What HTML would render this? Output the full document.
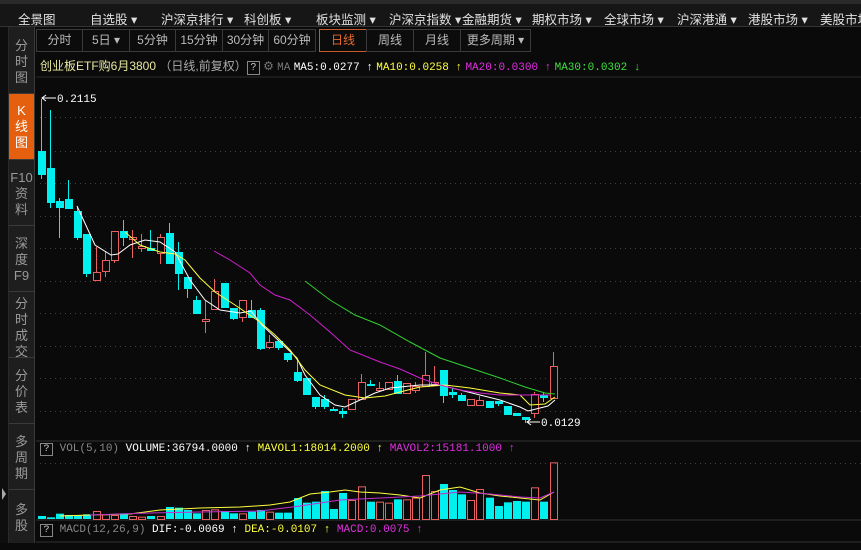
<!DOCTYPE html>
<html><head><meta charset="utf-8"><style>
*{margin:0;padding:0;box-sizing:border-box}
body{width:861px;height:543px;background:#0a0a0a;overflow:hidden;position:relative;font-family:"Liberation Sans","Noto Sans CJK SC",sans-serif;color:#ccc}
.top{position:absolute;left:0;top:0;width:861px;height:27px;background:#161616;border-top:4px solid #2a2a2a;border-bottom:1px solid #333}
.top span{position:absolute;top:5px;font-size:12.5px;color:#e0e0e0;white-space:nowrap}
.side{position:absolute;left:0;top:27px;width:35px;height:516px;background:#0e0e0e}
.side .col{position:absolute;left:8px;top:0;width:27px;height:516px;background:#1e1e1e;border-right:1px solid #3a3a3a;border-left:1px solid #2a2a2a}
.tab{position:absolute;left:9px;width:25px;text-align:center;font-size:13px;line-height:16px;color:#9a9a9a;border-bottom:1px solid #3a3a3a}
.tb{position:absolute;top:29px;height:23px;border:1px solid #3a3a3a;font-size:12px;color:#bbb;text-align:center;line-height:21px;background:#0c0c0c}
.info{position:absolute;top:57px;font-size:12px;white-space:nowrap}
.m{font-family:"Liberation Mono","Noto Sans CJK SC",monospace;font-size:11px}
svg{position:absolute;left:0;top:0}
</style></head><body>
<div class="top">
<span style="left:18px">全景图</span>
<span style="left:90px">自选股 ▾</span>
<span style="left:161px">沪深京排行 ▾</span>
<span style="left:244px">科创板 ▾</span>
<span style="left:316px">板块监测 ▾</span>
<span style="left:389px">沪深京指数 ▾</span>
<span style="left:462px">金融期货 ▾</span>
<span style="left:532px">期权市场 ▾</span>
<span style="left:604px">全球市场 ▾</span>
<span style="left:677px">沪深港通 ▾</span>
<span style="left:748px">港股市场 ▾</span>
<span style="left:820px">美股市场</span>
</div>
<div class="side"><div class="col"></div></div>
<div class="tab" style="top:30px;height:64px;padding-top:8px">分<br>时<br>图</div>
<div class="tab" style="top:94px;height:66px;padding-top:9px;background:#e45f0e;color:#fff">K<br>线<br>图</div>
<div class="tab" style="top:160px;height:66px;padding-top:10px">F10<br>资<br>料</div>
<div class="tab" style="top:226px;height:66px;padding-top:10px">深<br>度<br>F9</div>
<div class="tab" style="top:292px;height:66px;padding-top:4px">分<br>时<br>成<br>交</div>
<div class="tab" style="top:358px;height:66px;padding-top:10px">分<br>价<br>表</div>
<div class="tab" style="top:424px;height:66px;padding-top:10px">多<br>周<br>期</div>
<div class="tab" style="top:490px;height:60px;padding-top:12px;border:none">多<br>股</div>
<div style="position:absolute;left:2px;top:488px;width:0;height:0;border-top:6px solid transparent;border-bottom:6px solid transparent;border-left:4px solid #aaa"></div>

<div class="tb" style="left:36px;width:47px">分时</div>
<div class="tb" style="left:82px;width:48px">5日 ▾</div>
<div class="tb" style="left:129px;width:47px">5分钟</div>
<div class="tb" style="left:175px;width:48px">15分钟</div>
<div class="tb" style="left:222px;width:47px">30分钟</div>
<div class="tb" style="left:268px;width:48px">60分钟</div>
<div class="tb" style="left:319px;width:48px;border-color:#c85a2a;color:#e86a30">日线</div>
<div class="tb" style="left:366px;width:48px">周线</div>
<div class="tb" style="left:413px;width:48px">月线</div>
<div class="tb" style="left:460px;width:71px">更多周期 ▾</div>

<div class="info" style="left:40px;color:#e8e8a0">创业板ETF购6月3800 <span style="color:#aaa">（日线,前复权）</span><span style="display:inline-block;border:1px solid #888;color:#ccc;width:13px;height:14px;line-height:12px;text-align:center;font-size:10px">?</span> <span style="color:#777">⚙ <span class="m">MA</span></span> <span class="m" style="color:#fff">MA5:0.0277 ↑</span> <span class="m" style="color:#ffff40">MA10:0.0258 ↑</span> <span class="m" style="color:#e030e0">MA20:0.0300 ↑</span> <span class="m" style="color:#40e040">MA30:0.0302 ↓</span></div>

<div class="info m" style="left:40px;top:443px;font-size:11px"><span style="display:inline-block;border:1px solid #888;width:13px;height:13px;line-height:11px;text-align:center;font-size:10px">?</span> <span style="color:#888">VOL(5,10)</span> <span style="color:#fff">VOLUME:36794.0000 ↑</span> <span style="color:#ffff40">MAVOL1:18014.2000 ↑</span> <span style="color:#e030e0">MAVOL2:15181.1000 ↑</span></div>
<div class="info m" style="left:40px;top:524px;font-size:11px"><span style="display:inline-block;border:1px solid #888;width:13px;height:13px;line-height:11px;text-align:center;font-size:10px">?</span> <span style="color:#888">MACD(12,26,9)</span> <span style="color:#fff">DIF:-0.0069 ↑</span> <span style="color:#ffff40">DEA:-0.0107 ↑</span> <span style="color:#e030e0">MACD:0.0075 ↑</span></div>

<svg id="c" width="861" height="543" xmlns="http://www.w3.org/2000/svg">
<line x1="36" y1="77" x2="861" y2="77" stroke="#2a2a2a"/>
<line x1="36" y1="441" x2="861" y2="441" stroke="#333"/>
<line x1="36" y1="520" x2="861" y2="520" stroke="#333"/>
<line x1="36" y1="542" x2="861" y2="542" stroke="#333"/>
<g id="grid" stroke="#444" stroke-dasharray="1,4"></g>
<g id="vol"></g>
<g id="cd"></g>
<polyline fill="none" stroke="#fff" stroke-width="1" points="77,206 95,245 111,255 118,254 130,245 145,240 160,242 175,252 190,280 205,300 220,310 240,313 251,311 262,325 278,340 297,358 305,375 320,395 335,405 345,407 360,400 375,393 390,388 420,385 440,385 460,390 480,395 500,400 520,407 528,411 540,408 548,406 555,400"/>
<polyline fill="none" stroke="#ffff40" stroke-width="1" points="125,232 140,245 160,252 175,254 185,260 200,278 215,292 235,305 260,322 275,335 290,350 305,370 320,385 345,395 365,398 385,396 400,392 420,387 445,385 470,388 500,393 520,395 530,405 545,404 555,397"/>
<polyline fill="none" stroke="#d020d0" stroke-width="1" points="214,251 230,260 250,273 260,285 275,295 290,300 310,315 330,332 350,350 380,362 400,369 420,378 440,385 460,390 480,393 500,395 530,395 550,395"/>
<polyline fill="none" stroke="#30d030" stroke-width="1" points="305,281 330,300 355,315 380,325 410,342 440,358 470,368 500,378 525,387 545,393 555,394"/>
<polyline fill="none" stroke="#ffff40" stroke-width="1" points="60,516 90,515 130,514 160,510 200,508 240,507 270,505 290,502 310,494 330,492 345,490 360,492 380,493 400,495 420,498 440,490 460,487 480,493 500,496 520,498 540,500 554,492"/>
<polyline fill="none" stroke="#c030d0" stroke-width="1" points="90,515 150,513 200,512 260,511 300,506 340,500 380,498 420,496 460,492 490,494 520,497 540,498 554,492"/>
<text x="57" y="102" fill="#fff" font-size="11" font-family="Liberation Mono">0.2115</text>
<line x1="42" y1="98" x2="56" y2="98" stroke="#fff"/><path d="M46,95 L42,98 L46,101" stroke="#fff" fill="none"/>
<text x="541" y="426" fill="#fff" font-size="11" font-family="Liberation Mono">0.0129</text>
<line x1="527" y1="422" x2="540" y2="422" stroke="#fff"/><path d="M531,419 L527,422 L531,425" stroke="#fff" fill="none"/>
</svg>
<script>
var S='http://www.w3.org/2000/svg';
function el(p,t,a){var e=document.createElementNS(S,t);for(var k in a)e.setAttribute(k,a[k]);p.appendChild(e);return e;}
var g=document.getElementById('grid');
[117,151,183,216,248,281,313,346,378,411,463].forEach(function(y){el(g,'line',{x1:40,y1:y+.5,x2:861,y2:y+.5});});
var C=[[151,174,99,179,0],[168,202,110,208,0],[201,207,198,238,0],[199,208,180,208,0],[211,237,207,240,0],[234,273,234,277,0],[272,280,247,280,1],[260,271,252,277,1],[231,260,231,263,1],[231,237,220,246,0],[237,239,230,258,1],[246,248,234,252,1],[248,250,230,250,0],[237,253,234,264,1],[233,263,223,264,0],[252,273,242,290,0],[277,288,277,298,0],[300,313,296,313,0],[319,321,301,333,1],[291,309,279,310,1],[283,307,283,307,0],[308,318,308,320,0],[300,317,300,322,1],[310,317,300,317,0],[310,348,308,350,0],[342,347,335,349,1],[341,347,341,350,0],[353,359,353,362,0],[372,380,359,382,0],
[378,394,378,395,0],[397,406,397,409,0],[399,406,395,409,0],[409,410,407,411,0],[411,413,408,418,0],[399,409,399,409,1],[382,399,374,399,1],[384,385,380,386,0],[388,390,382,391,1],[382,389,382,389,1],[381,393,375,393,0],[383,393,383,393,1],[386,390,382,393,1],[375,386,352,386,1],[382,384,366,384,1],[370,395,370,403,0],[392,394,388,398,0],[395,400,393,401,0],[399,405,399,405,1],[400,405,396,405,1],[401,407,401,408,0],[401,403,401,406,0],[406,414,406,414,0],[413,415,413,416,0],[417,419,417,423,0],[394,413,392,418,1],[395,397,392,402,0],[366,398,352,398,1]];
var cd=document.getElementById('cd');
C.forEach(function(c,i){var x=Math.round(40.7+i*9.14);var col=c[4]?'#e86060':'#00f0f0';
el(cd,'line',{x1:x+.5,y1:c[2],x2:x+.5,y2:c[3],stroke:col});
var h=Math.max(1,c[1]-c[0]);
if(c[4])el(cd,'rect',{x:x-3+.5,y:c[0]+.5,width:7,height:h,fill:'#0a0a0a',stroke:col});
else el(cd,'rect',{x:x-3,y:c[0],width:8,height:h+1,fill:col});});
var V=[258,262,251,255,255,253,243,253,255,250,258,260,258,258,231,233,240,250,240,238,243,250,250,245,240,245,248,248,204,218,215,183,237,189,210,169,215,215,218,208,208,203,135,183,162,180,193,210,177,203,228,217,213,215,172,215,97];
var vg=document.getElementById('vol');
V.forEach(function(z,i){var x=Math.round(40.7+i*9.14);var top=430+z/3;var red=C[i]&&C[i][4];
if(red)el(vg,'rect',{x:x-3+.5,y:top+.5,width:7,height:519-top,fill:'none',stroke:'#e86060'});
else el(vg,'rect',{x:x-3,y:top,width:8,height:519-top,fill:'#00f0f0'});});
</script>
</body></html>
